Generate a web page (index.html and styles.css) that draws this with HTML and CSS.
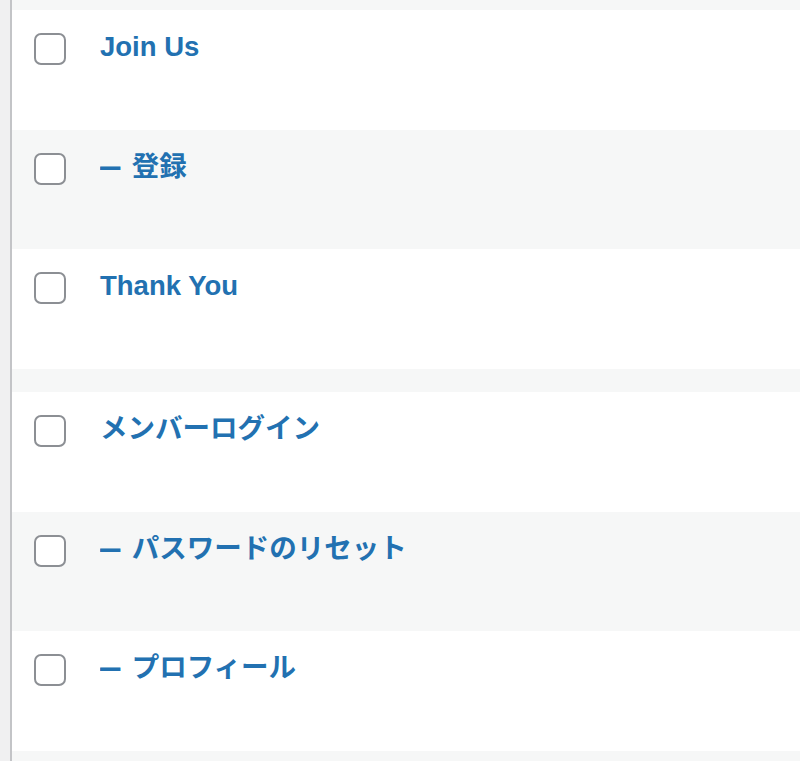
FILE: index.html
```html
<!DOCTYPE html>
<html lang="ja">
<head>
<meta charset="utf-8">
<title>Pages</title>
<link rel="stylesheet" href="styles.css">
</head>
<body>
<div class="wrap">
  <div class="table">
    <div class="top-strip"></div>
    <div class="row">
      <div class="check-col"><input type="checkbox" class="cb"></div>
      <div class="title-col"><a class="row-title" href="#">Join Us</a></div>
    </div>
    <div class="row alt">
      <div class="check-col"><input type="checkbox" class="cb"></div>
      <div class="title-col"><a class="row-title" href="#"><span class="dash">—</span> 登録</a></div>
    </div>
    <div class="row">
      <div class="check-col"><input type="checkbox" class="cb"></div>
      <div class="title-col"><a class="row-title" href="#">Thank You</a></div>
    </div>
    <div class="spacer"></div>
    <div class="row">
      <div class="check-col"><input type="checkbox" class="cb"></div>
      <div class="title-col"><a class="row-title" href="#">メンバーログイン</a></div>
    </div>
    <div class="row alt">
      <div class="check-col"><input type="checkbox" class="cb"></div>
      <div class="title-col"><a class="row-title" href="#"><span class="dash">—</span> パスワードのリセット</a></div>
    </div>
    <div class="row">
      <div class="check-col"><input type="checkbox" class="cb"></div>
      <div class="title-col"><a class="row-title" href="#"><span class="dash">—</span> プロフィール</a></div>
    </div>
    <div class="bottom-strip"></div>
  </div>
</div>
</body>
</html>
```

FILE: styles.css
```css
* { box-sizing: border-box; }
html, body {
  margin: 0;
  padding: 0;
  height: 100%;
  overflow: hidden;
}
body {
  background: #f0f0f1;
  font-family: "Liberation Sans", "Noto Sans CJK JP", sans-serif;
}
.wrap {
  padding-left: 10px;
  height: 100%;
}
.table {
  border-left: 2px solid #c3c4c7;
  background: #f6f7f7;
  height: 100%;
  display: flex;
  flex-direction: column;
}
.top-strip {
  height: 10px;
  flex: none;
  background: #f6f7f7;
}
.row {
  flex: none;
  height: 120px;
  background: #ffffff;
  display: flex;
  align-items: flex-start;
}
.row.alt {
  height: 119px;
  background: #f6f7f7;
}
.spacer {
  flex: none;
  height: 23px;
  background: #f6f7f7;
}
.bottom-strip {
  flex: 1;
  background: #f6f7f7;
}
.check-col {
  width: 88px;
  padding: 23px 0 0 22px;
  flex: none;
}
.cb {
  appearance: none;
  -webkit-appearance: none;
  display: block;
  margin: 0;
  width: 32px;
  height: 32px;
  border: 2px solid #8c8f94;
  border-radius: 7px;
  background: #ffffff;
}
.title-col {
  padding-top: 17px;
}
.row-title {
  font-size: 27.5px;
  line-height: 40px;
  font-weight: 700;
  color: #2271b1;
  text-decoration: none;
}
.dash {
  display: inline-block;
  width: 24px;
  font-family: "Liberation Sans", sans-serif;
  transform: scale(0.74, 1.25);
  transform-origin: left center;
}
```
